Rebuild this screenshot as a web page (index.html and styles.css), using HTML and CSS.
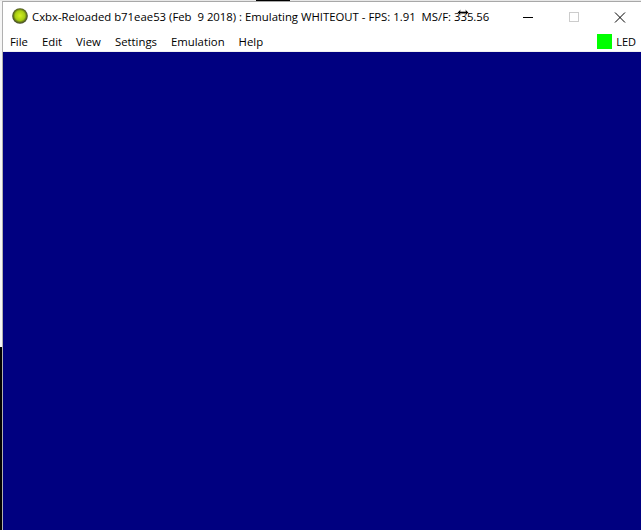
FILE: index.html
```html
<!DOCTYPE html>
<html lang="en">
<head>
<meta charset="utf-8">
<title>Cxbx-Reloaded</title>
<link rel="stylesheet" href="styles.css">
</head>
<body>
<div class="desktop-top">
  <i class="seg-black"></i>
</div>
<div class="window">
  <header class="titlebar">
    <svg class="app-icon" viewBox="0 0 16 16" aria-hidden="true">
      <defs>
        <radialGradient id="orb" cx="50%" cy="48%" r="52%">
          <stop offset="0" stop-color="#d4f020"/>
          <stop offset="0.6" stop-color="#a6cc12"/>
          <stop offset="0.8" stop-color="#66781a"/>
          <stop offset="1" stop-color="#3a3e2c"/>
        </radialGradient>
      </defs>
      <circle cx="8" cy="8" r="7.8" fill="url(#orb)"/>
    </svg>
    <span class="title">Cxbx-Reloaded b71eae53 (Feb&nbsp; 9 2018) : Emulating WHITEOUT - FPS: 1.91&nbsp; MS/F: 335.56</span>
    <div class="controls">
      <svg class="ctl" viewBox="0 0 46 30" aria-hidden="true"><path d="M18 15.5h10" stroke="#000" fill="none"/></svg>
      <svg class="ctl" viewBox="0 0 46 30" aria-hidden="true"><rect x="18.5" y="10.5" width="9" height="9" stroke="#ccc" fill="none"/></svg>
      <svg class="ctl" viewBox="0 0 46 30" aria-hidden="true"><path d="M18 10.5l10 10M28 10.5l-10 10" stroke="#000" fill="none"/></svg>
    </div>
  </header>
  <nav class="menubar">
    <span class="item">File</span>
    <span class="item">Edit</span>
    <span class="item">View</span>
    <span class="item">Settings</span>
    <span class="item">Emulation</span>
    <span class="item">Help</span>
    <span class="led"><i class="led-box"></i>LED</span>
  </nav>
  <main class="screen"></main>
</div>
<svg class="cursor" viewBox="0 0 12 7" aria-hidden="true"><path d="M0.5 3.5L3.5 0.5V2.5H8.5V0.5L11.5 3.5L8.5 6.5V4.5H3.5V6.5Z" fill="#000" stroke="#fff" stroke-width="0.4"/></svg>
</body>
</html>
```
FILE: styles.css
```css
html, body {
  margin: 0;
  height: 100%;
  overflow: hidden;
}
body {
  background: linear-gradient(#f6f6f6 347px, #000 347px);
  font-family: "Open Sans", "Liberation Sans", sans-serif;
  color: #000;
}
.desktop-top {
  height: 1px;
  padding-left: 256px;
  background: #e8e8e8;
}
.seg-black {
  display: block;
  width: 34px;
  height: 1px;
  background: #000;
}
.window {
  height: 529px;
  margin-left: 2px;
  display: flex;
  flex-direction: column;
  background: #fff;
  border-top: 1px solid #a8a8a8;
  border-left: 1px solid #b0b0b0;
  box-sizing: border-box;
}
.titlebar {
  height: 30px;
  flex: none;
  display: flex;
  align-items: center;
  padding-left: 9px;
  font-size: 11.35px;
}
.app-icon {
  flex: none;
  width: 16px;
  height: 16px;
  margin-right: 4px;
  margin-bottom: 2px;
}
.title {
  white-space: pre;
  margin-bottom: 1px;
}
.controls {
  margin-left: auto;
  margin-right: -2px;
  display: flex;
  flex: none;
}
.ctl {
  width: 46px;
  height: 30px;
}
.menubar {
  height: 19px;
  flex: none;
  display: flex;
  align-items: center;
  gap: 14px;
  padding-left: 7px;
  font-size: 11.35px;
  border-bottom: 1px solid #f0f0f0;
}
.led {
  margin-left: auto;
  margin-right: 5px;
  display: flex;
  align-items: center;
  gap: 4px;
  font-size: 11px;
}
.led-box {
  width: 15px;
  height: 15px;
  background: #00ff00;
}
.screen {
  flex: 1;
  background: #000080;
}
.cursor {
  position: absolute;
  left: 457px;
  top: 9px;
  width: 12px;
  height: 7px;
}
```
